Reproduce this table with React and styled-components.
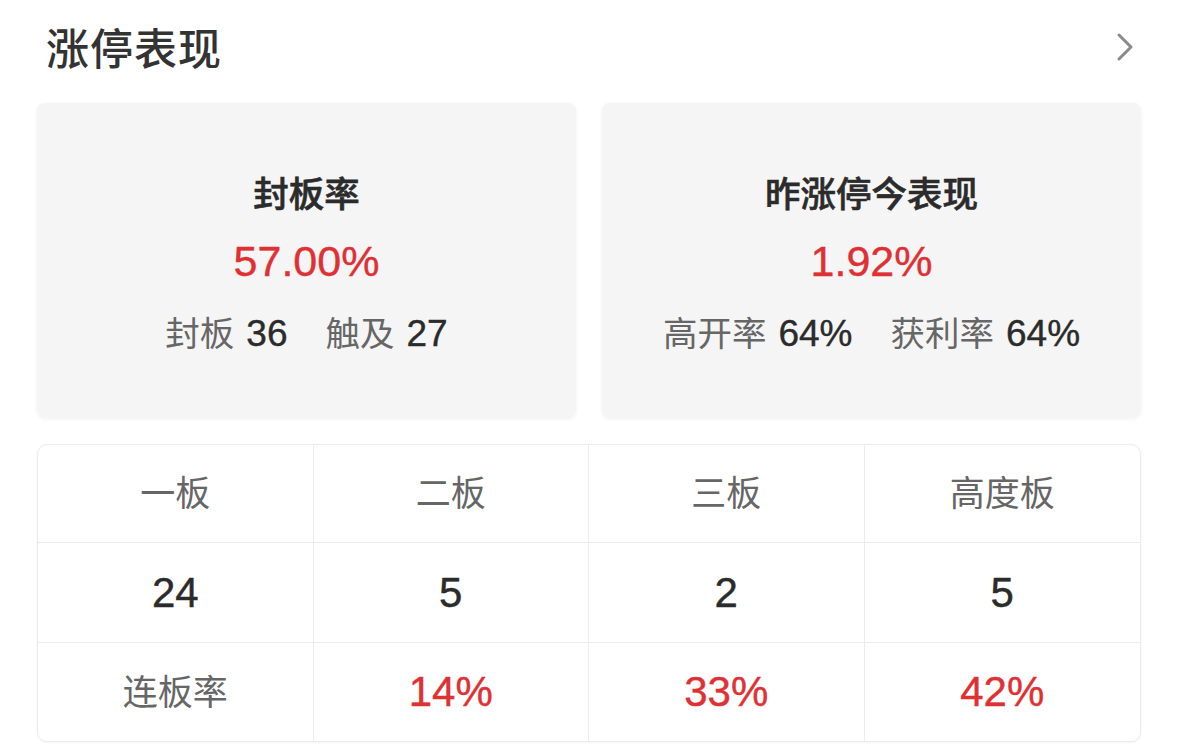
import React from 'react'
import styled, { createGlobalStyle } from 'styled-components';

const GlobalStyle = createGlobalStyle`
  html, body {
    margin: 0;
    padding: 0;
    background: #fff;
  }
  body {
    font-family: "Liberation Sans", "Noto Sans CJK SC", sans-serif;
    color: #333;
  }
`;

const RED = '#df3034';

const summary = [
    { title: '封板率', value: '57.00%', items: [['封板', '36'], ['触及', '27']] },
    { title: '昨涨停今表现', value: '1.92%', items: [['高开率', '64%'], ['获利率', '64%']] },
];

const heads = ['一板', '二板', '三板', '高度板'];
const counts = ['24', '5', '2', '5'];
const rates = ['14%', '33%', '42%'];

function App() {
    return (
<Page>
    <GlobalStyle />
    <Header>
        <Title>涨停表现</Title>
        <svg width="20" height="30" viewBox="0 0 20 30">
            <path d="M4 3 L16 15 L4 27" fill="none" stroke="#8a8a8a" strokeWidth="3" strokeLinecap="round" strokeLinejoin="round" />
        </svg>
    </Header>

    <Cards>
        {summary.map(card => (
            <Card key={card.title}>
                <CardTitle>{card.title}</CardTitle>
                <CardValue>{card.value}</CardValue>
                <CardSub>
                    {card.items.map(([label, num]) => (
                        <SubItem key={label}>
                            <span className="label">{label}</span>
                            <span className="num">{num}</span>
                        </SubItem>
                    ))}
                </CardSub>
            </Card>
        ))}
    </Cards>

    <Table>
        {heads.map((h, i) => (
            <Cell key={h} $row={0} $last={i === 3}><HeadText>{h}</HeadText></Cell>
        ))}
        {counts.map((c, i) => (
            <Cell key={'c' + i} $row={1} $last={i === 3}><Num>{c}</Num></Cell>
        ))}
        <Cell $row={2}><HeadText>连板率</HeadText></Cell>
        {rates.map((r, i) => (
            <Cell key={'r' + i} $row={2} $last={i === 2}><Num $red>{r}</Num></Cell>
        ))}
    </Table>
</Page>
    )
}

export default App

const Page = styled.div`
  width: 1179px;
  height: 750px;
  box-sizing: border-box;
  padding: 0 38px 0 37px;
  overflow: hidden;
`;

const Header = styled.div`
  height: 92px;
  display: flex;
  align-items: center;
  justify-content: space-between;
  padding-left: 9px;
  padding-right: 6px;
  margin-bottom: 11px;

  svg {
    margin-top: 2px;
  }
`;

const Title = styled.h1`
  margin: 0;
  font-family: "Noto Sans CJK SC", sans-serif;
  font-size: 43px;
  font-weight: 500;
  color: #333;
  letter-spacing: 1px;
`;

const Cards = styled.div`
  display: grid;
  grid-template-columns: 1fr 1fr;
  gap: 26px;
  margin-bottom: 26px;
`;

const Card = styled.div`
  height: 315px;
  box-sizing: border-box;
  padding-top: 6px;
  background: #f5f5f5;
  border-radius: 8px;
  box-shadow: 0 1px 4px rgba(0, 0, 0, 0.06);
  display: flex;
  flex-direction: column;
  align-items: center;
  justify-content: center;
`;

const CardTitle = styled.div`
  font-family: "Noto Sans CJK SC", sans-serif;
  font-size: 35.5px;
  font-weight: 500;
  color: #2b2b2b;
  line-height: 68px;
  -webkit-text-stroke: 0.6px #2b2b2b;
`;

const CardValue = styled.div`
  font-size: 43px;
  color: ${RED};
  line-height: 70px;
  -webkit-text-stroke: 0.4px ${RED};
`;

const CardSub = styled.div`
  display: flex;
  gap: 38px;
  line-height: 70px;
`;

const SubItem = styled.div`
  display: flex;
  gap: 12px;
  align-items: baseline;

  .label {
    font-family: "Noto Sans CJK SC", sans-serif;
    font-size: 34.5px;
    color: #666;
  }

  .num {
    font-size: 37px;
    color: #2b2b2b;
    -webkit-text-stroke: 0.4px #2b2b2b;
  }
`;

const Table = styled.div`
  display: grid;
  grid-template-columns: repeat(4, 1fr);
  grid-template-rows: 98px 100px 98px;
  border: 1.5px solid #ebebeb;
  border-radius: 10px;
  box-shadow: 0 1px 3px rgba(0, 0, 0, 0.05);
  overflow: hidden;
`;

const Cell = styled.div`
  display: flex;
  align-items: center;
  justify-content: center;
  border-right: ${p => (p.$last ? 'none' : '1px solid #ececec')};
  border-bottom: ${p => (p.$row === 2 ? 'none' : '1.5px solid #ebebeb')};
`;

const HeadText = styled.span`
  font-family: "Noto Sans CJK SC", sans-serif;
  font-size: 35px;
  color: #666;
  margin-top: -6px;
`;

const Num = styled.span`
  font-size: 42px;
  color: ${p => (p.$red ? RED : '#2b2b2b')};
  -webkit-text-stroke: 0.4px ${p => (p.$red ? RED : '#2b2b2b')};
`;
